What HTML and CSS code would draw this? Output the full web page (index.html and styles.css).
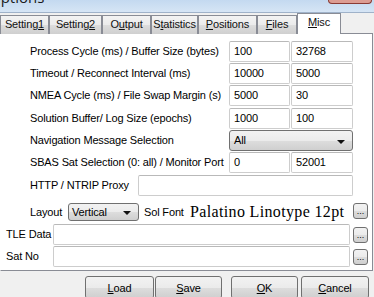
FILE: index.html
```html
<!DOCTYPE html>
<html lang="en">

<head>
    <meta charset="UTF-8">
    <meta name="viewport" content="width=device-width, initial-scale=1.0">
    <title>Options</title>
    <link rel="stylesheet" href="styles.css">
</head>

<body>
    <div class="window">
        <div class="titlebar">
            <span class="title">Options</span>
            <span class="close"></span>
        </div>

        <div class="client">
            <div class="tabs">
                <div class="tab tab-s1">Setting<u>1</u></div>
                <div class="tab tab-s2">Setting<u>2</u></div>
                <div class="tab tab-out">O<u>u</u>tput</div>
                <div class="tab tab-stat">S<u>t</u>atistics</div>
                <div class="tab tab-pos"><u>P</u>ositions</div>
                <div class="tab tab-files"><u>F</u>iles</div>
                <div class="tab tab-misc active"><u>M</u>isc</div>
            </div>

            <div class="page">
                <div class="row">
                    <span class="lbl">Process Cycle (ms) / Buffer Size (bytes)</span>
                    <div class="field f1">100</div>
                    <div class="field f2">32768</div>
                </div>
                <div class="row">
                    <span class="lbl">Timeout / Reconnect Interval (ms)</span>
                    <div class="field f1">10000</div>
                    <div class="field f2">5000</div>
                </div>
                <div class="row">
                    <span class="lbl">NMEA Cycle (ms) / File Swap Margin (s)</span>
                    <div class="field f1">5000</div>
                    <div class="field f2">30</div>
                </div>
                <div class="row step">
                    <span class="lbl">Solution Buffer/ Log Size (epochs)</span>
                    <div class="field f1">1000</div>
                    <div class="field f2">100</div>
                </div>
                <div class="row">
                    <span class="lbl">Navigation Message Selection</span>
                    <div class="combo combo-nav">All<span class="arrow"></span></div>
                </div>
                <div class="row">
                    <span class="lbl">SBAS Sat Selection (0: all) / Monitor Port</span>
                    <div class="field f1">0</div>
                    <div class="field f2">52001</div>
                </div>
                <div class="row step">
                    <span class="lbl lbl-proxy">HTTP / NTRIP Proxy</span>
                    <div class="field f-proxy"></div>
                </div>

                <div class="row row-layout">
                    <span class="lbl lbl-layout">Layout</span>
                    <div class="combo combo-layout">Vertical<span class="arrow"></span></div>
                    <span class="lbl-solfont">Sol Font</span>
                    <span class="font-sample">Palatino Linotype 12pt</span>
                    <button class="dots">...</button>
                </div>
                <div class="row row-wide">
                    <span class="lbl lbl-short">TLE Data</span>
                    <div class="field f-wide"></div>
                    <button class="dots">...</button>
                </div>
                <div class="row row-wide">
                    <span class="lbl lbl-short">Sat No</span>
                    <div class="field f-wide"></div>
                    <button class="dots">...</button>
                </div>
            </div>

            <div class="buttons">
                <button class="btn btn-load"><u>L</u>oad</button>
                <button class="btn btn-save"><u>S</u>ave</button>
                <button class="btn btn-ok"><u>O</u>K</button>
                <button class="btn btn-cancel"><u>C</u>ancel</button>
            </div>
        </div>
    </div>
</body>

</html>
```

FILE: styles.css
```css
html,
body {
    margin: 0;
    padding: 0;
}

body {
    width: 374px;
    height: 297px;
    overflow: hidden;
    background: #f0f0f0;
    font-family: "Liberation Sans", Arial, sans-serif;
    font-size: 11px;
    letter-spacing: -0.15px;
    color: #000;
}

u {
    text-decoration: underline;
    text-underline-offset: 1px;
}

/* title bar, only its lower edge shows */
.titlebar {
    height: 12px;
    border-bottom: 1px solid #9fb2c9;
    background: linear-gradient(to bottom, #c4d9f0, #d6e5f5);
    display: flex;
    justify-content: space-between;
    align-items: flex-start;
    overflow: hidden;
}

.title {
    font-family: "Open Sans", "DejaVu Sans", sans-serif;
    font-size: 15px;
    letter-spacing: 0;
    line-height: 15px;
    margin-top: -10px;
    margin-left: -11px;
    color: #1b1b1b;
}

.close {
    width: 42px;
    height: 3px;
    margin-right: 2px;
    border: 1px solid #8a3a33;
    border-top: none;
    border-radius: 0 0 4px 4px;
    background: #dc9c92;
}

/* tab strip */
.client {
    background: #f0f0f0;
}

.tabs {
    display: flex;
    align-items: flex-end;
    height: 21px;
    margin-bottom: -1px;
}

.tab {
    box-sizing: border-box;
    height: 19px;
    border: 1px solid #898c95;
    border-bottom: none;
    background: linear-gradient(to bottom, #f3f3f3 0%, #ebebeb 50%, #dddddd 51%, #cfcfcf 100%);
    text-align: center;
    line-height: 17px;
    color: #111;
    white-space: nowrap;
}

.tab-s1 { width: 49px; }
.tab-s2 { width: 53px; }
.tab-out { width: 49px; }
.tab-stat { width: 47px; }
.tab-pos { width: 59px; }
.tab-files { width: 40px; }

.tab.active {
    width: 44px;
    height: 21px;
    background: #fff;
    position: relative;
    z-index: 1;
    line-height: 17px;
}

/* page */
.page {
    width: 373px;
    box-sizing: border-box;
    background: #fff;
    border: 1px solid #898c95;
    border-left-color: #fff;
    padding: 7px 0 2px 0;
}

.row {
    display: flex;
    align-items: flex-start;
    height: 22px;
    padding-left: 29px;
}

.row.step {
    margin-top: 1px;
}

.lbl {
    width: 199px;
    line-height: 21px;
    white-space: nowrap;
}

.field {
    box-sizing: border-box;
    height: 21px;
    border: 1px solid #cdcdcd;
    border-top-color: #b9b9b9;
    border-radius: 2px;
    padding-left: 4px;
    line-height: 19px;
    background: #fff;
}

.f1 {
    width: 61px;
    margin-right: 1px;
}

.f2 {
    width: 62px;
}

.lbl-proxy {
    width: 108px;
}

.f-proxy {
    width: 215px;
}

/* combo boxes */
.combo {
    box-sizing: border-box;
    position: relative;
    border: 1px solid #707070;
    border-radius: 3px;
    background: linear-gradient(to bottom, #f2f2f2 0%, #ebebeb 50%, #dddddd 51%, #cfcfcf 100%);
    padding-left: 4px;
}

.combo-nav {
    width: 124px;
    height: 21px;
    line-height: 19px;
}

.combo-layout {
    width: 71px;
    height: 18px;
    line-height: 16px;
    padding-left: 3px;
}

.arrow {
    position: absolute;
    right: 7px;
    top: 50%;
    margin-top: -1px;
    width: 0;
    height: 0;
    border-left: 4px solid transparent;
    border-right: 4px solid transparent;
    border-top: 4px solid #111;
}

/* layout / font row */
.row-layout {
    height: 27px;
    box-sizing: border-box;
    padding-top: 3px;
    align-items: center;
}

.lbl-layout {
    width: 38px;
    line-height: 18px;
}

.lbl-solfont {
    margin-left: 5px;
    width: 46px;
    white-space: nowrap;
}

.font-sample {
    flex: 1;
    font-family: "Liberation Serif", "Times New Roman", serif;
    font-size: 16px;
    letter-spacing: 0.35px;
    white-space: nowrap;
}

.dots {
    box-sizing: border-box;
    width: 15px;
    height: 16px;
    margin: 3px 4px 0 3px;
    padding: 0;
    border: 1px solid #707070;
    border-radius: 3px;
    background: linear-gradient(to bottom, #f2f2f2 0%, #ebebeb 50%, #dddddd 51%, #cfcfcf 100%);
    font-family: "Liberation Sans", Arial, sans-serif;
    font-size: 9px;
    letter-spacing: 0;
    line-height: 14px;
    color: #000;
}

.row-layout .dots {
    margin-top: -2px;
}

.row-wide {
    padding-left: 5px;
}

.lbl-short {
    width: 47px;
}

.f-wide {
    flex: 1;
}

/* dialog buttons */
.buttons {
    display: flex;
    padding-left: 85px;
    margin-top: 5px;
}

.btn {
    box-sizing: border-box;
    height: 23px;
    padding: 0;
    border: 1px solid #707070;
    border-radius: 3px;
    background: linear-gradient(to bottom, #f2f2f2 0%, #ebebeb 50%, #dddddd 51%, #cfcfcf 100%);
    font-family: "Liberation Sans", Arial, sans-serif;
    font-size: 11px;
    letter-spacing: -0.15px;
    color: #000;
}

.btn-load {
    width: 69px;
    margin-right: 1px;
}

.btn-save {
    width: 67px;
    margin-right: 9px;
}

.btn-ok {
    width: 67px;
    margin-right: 3px;
}

.btn-cancel {
    width: 68px;
}
```
